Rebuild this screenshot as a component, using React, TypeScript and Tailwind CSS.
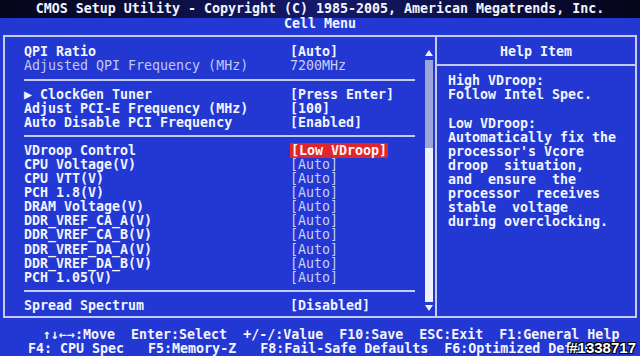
import React from 'react';

type Item = { label: string; value: string; dim?: boolean; faint?: boolean; arrow?: boolean; active?: boolean };

const groups: Item[][] = [
  [
    { label: 'QPI Ratio', value: '[Auto]' },
    { label: 'Adjusted QPI Frequency (MHz)', value: '7200MHz', dim: true },
  ],
  [
    { label: 'ClockGen Tuner', value: '[Press Enter]', arrow: true },
    { label: 'Adjust PCI-E Frequency (MHz)', value: '[100]' },
    { label: 'Auto Disable PCI Frequency', value: '[Enabled]' },
  ],
  [
    { label: 'VDroop Control', value: '[Low VDroop]', active: true },
    { label: 'CPU Voltage(V)', value: '[Auto]', faint: true },
    { label: 'CPU VTT(V)', value: '[Auto]', faint: true },
    { label: 'PCH 1.8(V)', value: '[Auto]', faint: true },
    { label: 'DRAM Voltage(V)', value: '[Auto]', faint: true },
    { label: 'DDR_VREF_CA_A(V)', value: '[Auto]', faint: true },
    { label: 'DDR_VREF_CA_B(V)', value: '[Auto]', faint: true },
    { label: 'DDR_VREF_DA_A(V)', value: '[Auto]', faint: true },
    { label: 'DDR_VREF_DA_B(V)', value: '[Auto]', faint: true },
    { label: 'PCH 1.05(V)', value: '[Auto]', faint: true },
  ],
  [{ label: 'Spread Spectrum', value: '[Disabled]' }],
];

const helpLines = [
  'High VDroop:',
  'Follow Intel Spec.',
  '',
  'Low VDroop:',
  'Automatically fix the',
  "processor's Vcore",
  'droop  situation,',
  'and  ensure  the',
  'processor  receives',
  'stable  voltage',
  'during overclocking.',
];

function Row({ item }: { item: Item }) {
  return (
    <div className="grid grid-cols-[266px_1fr] h-[14.1px] items-center">
      <span className={item.dim ? 'font-normal text-[#c0c8f2]' : 'text-[#f2f4ff]'}>
        {item.arrow ? '\u25B6 ' + item.label : item.label}
      </span>
      <span>
        <span
          className={
            item.active
              ? 'bg-[#e0262c] text-[#fff4f4] px-[1px]'
              : item.dim || item.faint
              ? 'font-normal text-[#c8cff4]'
              : 'text-[#f2f4ff]'
          }
        >
          {item.value}
        </span>
      </span>
    </div>
  );
}

function Separator() {
  return (
    <div className="h-[14px] flex items-center">
      <div className="h-[2px] w-full bg-[#c4cbf2]" />
    </div>
  );
}

export default function App() {
  return (
    <div
      className="relative w-[640px] h-[356px] overflow-hidden bg-[#2337d3] text-[13.3px] font-bold leading-none text-[#f2f4ff]"
      style={{ fontFamily: '"DejaVu Sans Mono", "Liberation Mono", monospace' }}
    >
      {/* title bar */}
      <div className="h-[18px] bg-gradient-to-r from-[#05051a] via-[#141a6a] to-[#05051a] flex items-center justify-center whitespace-pre">
        CMOS Setup Utility - Copyright (C) 1985-2005, American Megatrends, Inc.
      </div>
      <div className="h-[12px] flex items-center justify-center">Cell Menu</div>

      {/* main frame */}
      <div className="mx-[3px] mt-[5px] h-[283px] border-2 border-[#c4cbf2] flex">
        <div className="w-[430px] flex">
          <div className="flex-1 pl-[19px] pr-[9px] pt-[8px] whitespace-pre">
            {groups.map((g, i) => (
              <React.Fragment key={i}>
                {i > 0 && <Separator />}
                {g.map(item => (
                  <Row key={item.label} item={item} />
                ))}
              </React.Fragment>
            ))}
          </div>
          <div className="w-[9px] mr-[2px] flex flex-col items-center pt-[13px] pb-[5px]">
            <div className="w-0 h-0 border-x-[4px] border-x-transparent border-b-[6px] border-b-[#f0f2ff]" />
            <div className="mt-[4px] flex-1 w-[8px] flex flex-col">
              <div className="h-[88px] bg-[#9aa6dc]" />
              <div className="flex-1 bg-[#eef0fa]" />
            </div>
            <div className="mt-[3px] w-0 h-0 border-x-[4px] border-x-transparent border-t-[6px] border-t-[#f0f2ff]" />
          </div>
        </div>
        <div className="flex-1 border-l-2 border-[#c4cbf2] flex flex-col">
          <div className="h-[29px] border-b-2 border-[#c4cbf2] flex items-center justify-center pt-[3px]">
            Help Item
          </div>
          <div className="pl-[11px] pt-[8px] whitespace-pre">
            {helpLines.map((l, i) => (
              <div key={i} className="h-[14.1px] flex items-center">
                {l}
              </div>
            ))}
          </div>
        </div>
      </div>

      {/* footer */}
      <div className="mt-[10px] whitespace-pre">
        <div className="h-[14px] flex items-center pl-[43px]">
          {'\u2191\u2193\u2190\u2192:Move  Enter:Select  +/-/:Value  F10:Save  ESC:Exit  F1:General Help'}
        </div>
        <div className="h-[14px] flex items-center pl-[28px]">
          F4: CPU Spec   F5:Memory-Z   F8:Fail-Safe Defaults  F6:Optimized Defaults
        </div>
      </div>

      {/* watermark */}
      <div
        className="absolute right-[4px] bottom-[1px] text-[15px] font-bold text-white"
        style={{
          fontFamily: '"Liberation Sans", Arial, sans-serif',
          textShadow: '1px 1px 0 #000, -1px -1px 0 #000, 1px -1px 0 #000, -1px 1px 0 #000',
        }}
      >
        #1338717
      </div>
    </div>
  );
}
